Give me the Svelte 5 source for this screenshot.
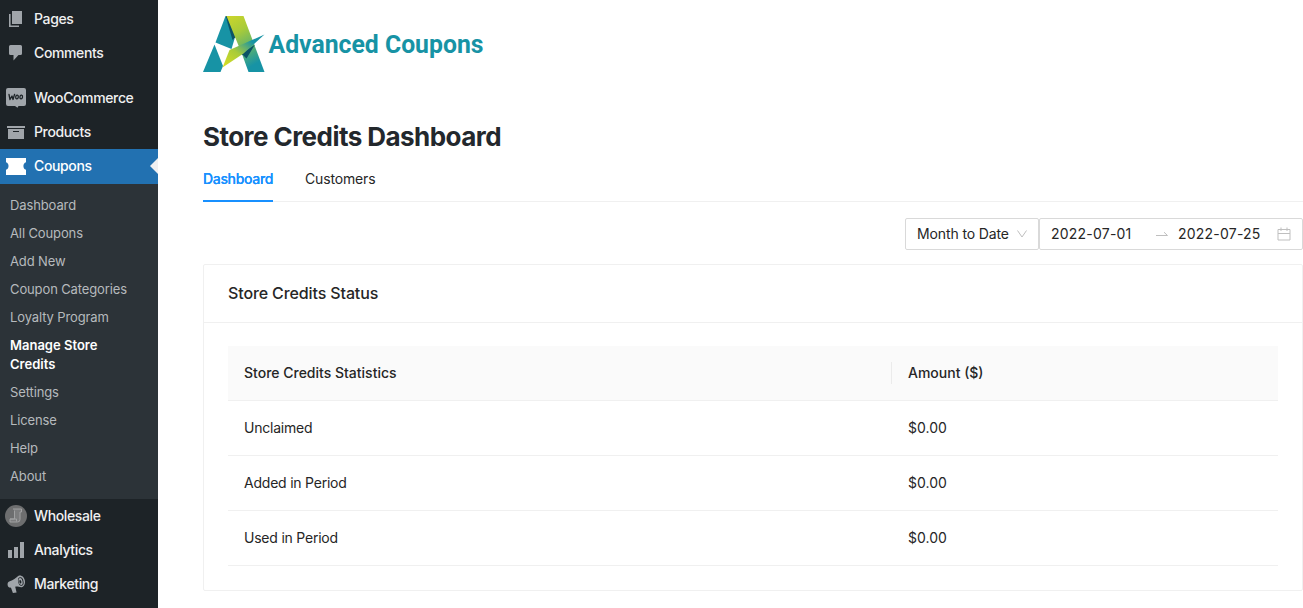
<script>
  const top = [
    { label: 'Pages', icon: 'pages' },
    { label: 'Comments', icon: 'comments' },
  ];
  const shop = [
    { label: 'WooCommerce', icon: 'woo' },
    { label: 'Products', icon: 'products' },
    { label: 'Coupons', icon: 'coupons', current: true },
  ];
  const sub = ['Dashboard', 'All Coupons', 'Add New', 'Coupon Categories', 'Loyalty Program', 'Manage Store Credits', 'Settings', 'License', 'Help', 'About'];
  const bottom = [
    { label: 'Wholesale', icon: 'wholesale' },
    { label: 'Analytics', icon: 'analytics' },
    { label: 'Marketing', icon: 'marketing' },
  ];
  const rows = [
    ['Unclaimed', '$0.00'],
    ['Added in Period', '$0.00'],
    ['Used in Period', '$0.00'],
  ];
</script>

{#snippet item(it)}
  <li class="item" class:current={it.current}>
    <svg class="icon" width="32" height="34" viewBox="0 0 32 34" fill="#a0a5aa">
      {#if it.icon === 'pages'}
        <path d="M12 9h10v13H12zM9 12h1.600v11.400H19V25H9z" />
      {:else if it.icon === 'comments'}
        <path d="M10.500 9h10q1.500 0 1.500 1.500v7q0 1.500-1.500 1.500H18.500L13.500 24.500V19h-3Q9 19 9 17.500v-7Q9 9 10.500 9z" />
      {:else if it.icon === 'woo'}
        <path d="M8 7h16q2 0 2 2v14q0 2-2 2H18.500L17.500 26.700 15 25H8Q6 25 6 23V9Q6 7 8 7z" />
        <g fill="none" stroke="#1d2327" stroke-width="1.300" stroke-linejoin="round" stroke-linecap="round">
          <path d="M9 13.500l1 5 2-3.500 1 3.500 1.600-5.200" />
          <ellipse cx="17" cy="16" rx="1.300" ry="1.900" transform="rotate(12 17 16)" />
          <ellipse cx="21.200" cy="16" rx="1.300" ry="1.900" transform="rotate(12 21.200 16)" />
        </g>
      {:else if it.icon === 'products'}
        <path d="M7 11h18v2H7z" />
        <path fill-rule="evenodd" d="M8 14h16v10H8zM13 16v1h6v-1z" />
      {:else if it.icon === 'coupons'}
        <path fill="#fff" d="M6 9h20v4.200c-3.400 1-3.400 6.600 0 7.600V26H6v-5.200c3.400-1 3.400-6.600 0-7.600z" />
      {:else if it.icon === 'wholesale'}
        <circle cx="16" cy="17" r="11" fill="#6d6e6f" />
        <path d="M13 10h8.500v3H20v7.500q0 2.500-2.500 2.500H10v-3h4.500V11.500" fill="#7c7d7e" stroke="#a0a1a2" stroke-width="1" />
        <path d="M10 20h6.500v2.500" fill="none" stroke="#a0a1a2" stroke-width="1" />
      {:else if it.icon === 'analytics'}
        <path d="M8 17h4v8H8zM14 14h4v11h-4zM20 9h4v16h-4z" />
      {:else if it.icon === 'marketing'}
        <path d="M18.200 9c2.800-1.500 6.200 1 6.700 4.800.500 3.200-.900 6.100-3.300 6.400-1.900.200-3.500-.800-5.600-.600l-.800.200 1.400 5.700-3.700.500-2-5.400c-1.700.200-3-.700-3.300-2.600-.300-1.900.600-3.300 2.200-3.800 3.500-.900 6-3.200 8.400-5.200z" />
        <ellipse cx="20.800" cy="14.500" rx="2.700" ry="4.300" transform="rotate(-12 20.800 14.500)" fill="#1d2327" />
        <ellipse cx="20.600" cy="14.500" rx="2" ry="3.500" transform="rotate(-12 20.800 14.500)" />
        <ellipse cx="20.300" cy="14.700" rx="1" ry="1.800" transform="rotate(-12 20.800 14.500)" fill="#1d2327" />
      {/if}
    </svg>
    <span>{it.label}</span>
  </li>
{/snippet}

<div class="page">
  <nav class="side">
    <ul>{#each top as it}{@render item(it)}{/each}</ul>
    <ul class="shop">{#each shop as it}{@render item(it)}{/each}</ul>
    <ul class="sub">
      {#each sub as s}<li class:active={s === 'Manage Store Credits'}>{s}</li>{/each}
    </ul>
    <ul>{#each bottom as it}{@render item(it)}{/each}</ul>
  </nav>

  <main>
    <svg class="logo" width="290" height="64" viewBox="0 0 290 64">
      <defs>
        <linearGradient id="leg" x1="0" y1="0" x2="0.400" y2="1">
          <stop offset="0" stop-color="#cdd62a" />
          <stop offset="0.350" stop-color="#a8cb3a" />
          <stop offset="0.750" stop-color="#4fac78" />
          <stop offset="1" stop-color="#1793a5" />
        </linearGradient>
        <linearGradient id="wing" x1="0" y1="1" x2="1" y2="0">
          <stop offset="0" stop-color="#dbe021" />
          <stop offset="0.400" stop-color="#a8cb3a" />
          <stop offset="0.750" stop-color="#1793a5" />
        </linearGradient>
      </defs>
      <path fill="#1793a5" d="M22.500 4L31.500 27 28.500 37 12.500 30.500z" />
      <path fill="#0b5366" d="M22.500 4H24.500L33 25 29.500 28z" />
      <path fill="url(#leg)" d="M23.500 4H40.500l21 56H45.500L39 42l-7-17z" />
      <path fill="#0b5366" d="M38 42l14-9.500-8.500 14-3-3z" />
      <path fill="#1793a5" d="M11.500 32.500L20 54 17.500 60H0z" />
      <path fill="url(#wing)" d="M61.500 22.500L40.500 41.500 19.500 55.500 26.500 38z" />
      <text x="65.500" y="41.300" textLength="215" lengthAdjust="spacingAndGlyphs">Advanced Coupons</text>
    </svg>

    <h1>Store Credits Dashboard</h1>

    <div class="tabs">
      <div class="tab on">Dashboard</div>
      <div class="tab">Customers</div>
    </div>

    <div class="filters">
      <div class="select">
        <span>Month to Date</span>
        <svg width="12" height="12" viewBox="0 0 12 12" fill="none" stroke="#bfbfbf"><path d="M1.500 2.500L6 9l4.500-6.500" /></svg>
      </div>
      <div class="range">
        <span class="date">2022-07-01</span>
        <svg class="arrow" width="14" height="14" viewBox="0 0 14 14" fill="none" stroke="#bfbfbf"><path d="M1 8.500h11.500L9 5.200" /></svg>
        <span class="date">2022-07-25</span>
        <svg class="cal" width="14" height="14" viewBox="0 0 14 14" fill="none" stroke="#bfbfbf"><path d="M1 2.500h12v10.500H1zM1 6.500h12M4 .5v3.500M10 .5v3.500" /></svg>
      </div>
    </div>

    <section class="card">
      <h2>Store Credits Status</h2>
      <div class="body">
        <div class="row head"><div>Store Credits Statistics</div><div class="amount">Amount ($)</div></div>
        {#each rows as [name, amount]}
          <div class="row"><div class="name">{name}</div><div class="amount">{amount}</div></div>
        {/each}
      </div>
    </section>
  </main>
</div>

<style>
  :global(body) { margin: 0; background: #fff; overflow: hidden; }
  * { box-sizing: border-box; }
  .page { display: flex; height: 608px; font-family: Inter, "Liberation Sans", sans-serif; font-size: 14px; color: #262626; }
  .side { width: 158px; flex: none; background: #1d2327; padding-top: 2px; overflow: hidden; }
  ul { list-style: none; margin: 0; padding: 0; }
  .shop { margin-top: 11px; }
  .item { position: relative; display: flex; height: 34px; align-items: center; color: #f0f0f1; line-height: 18px; white-space: nowrap; font-weight: 450; letter-spacing: -0.370px; }
  .icon { flex: none; margin-right: 2px; }
  .current { height: 35px; padding-bottom: 1px; background: #2271b1; color: #fff; }
  .current::after { content: ''; position: absolute; right: 0; top: 9px; border: 8px solid transparent; border-left: 0; border-right-color: #f0f0f1; }
  .sub { background: #2c3338; padding: 7px 0 8px; height: 315px; }
  .sub li { padding: 4.500px 30px 4.500px 10px; font-size: 13px; line-height: 19px; letter-spacing: -0.120px; color: #b6babd; white-space: nowrap; }
  .sub li.active { color: #fff; font-weight: 600; letter-spacing: 0; white-space: normal; padding-right: 40px; }
  main { flex: 1; padding-left: 45px; min-width: 0; }
  .logo { display: block; margin-top: 12px; overflow: visible; }
  .logo text { font: 700 26.500px Roboto, sans-serif; fill: #1793a5; }
  h1 { margin: 43px 0 0; font-size: 26px; line-height: 35px; height: 36px; font-weight: 700; letter-spacing: -0.550px; color: #23282d; }
  .tabs { display: flex; gap: 32px; height: 47px; border-bottom: 1px solid #f0f0f0; }
  .tab { height: 47px; line-height: 22px; padding-top: 13px; letter-spacing: -0.150px; }
  .on { width: 70px; color: #1890ff; border-bottom: 2px solid #1890ff; font-weight: 500; letter-spacing: -0.330px; text-shadow: 0 0 0.250px currentColor; }
  .filters { display: flex; justify-content: flex-end; margin-top: 16px; height: 32px; }
  .select, .range { display: flex; align-items: center; border: 1px solid #d9d9d9; border-radius: 2px; height: 32px; }
  .select { width: 134px; padding: 0 10px 0 11px; justify-content: space-between; white-space: nowrap; letter-spacing: -0.120px; }
  .select span, .date { line-height: 17px; padding-bottom: 2px; }
  .range { width: 264px; padding: 0 11px; }
  .date { width: 83px; letter-spacing: 0.220px; white-space: nowrap; }
  .arrow { margin: 0 9px 0 21px; }
  .cal { margin-left: 16px; }
  .card { margin-top: 14px; height: 327px; border: 1px solid #f0f0f0; border-radius: 2px; }
  h2 { margin: 0; height: 58px; line-height: 57px; padding-left: 24px; border-bottom: 1px solid #f0f0f0; font-size: 16px; font-weight: 500; letter-spacing: -0.120px; }
  .body { padding: 23px 24px; }
  .row { display: grid; grid-template-columns: 664px 1fr; height: 55px; align-items: center; border-bottom: 1px solid #f0f0f0; }
  .row > div { padding: 0 0 2px 16px; line-height: 17px; }
  .row > .name { letter-spacing: -0.220px; }
  .head { background: #fafafa; font-weight: 500; }
  .head .amount { position: relative; }
  .head .amount::before { content: ''; position: absolute; left: -1px; top: -2px; width: 1px; height: 22px; background: #ebebeb; }
</style>
